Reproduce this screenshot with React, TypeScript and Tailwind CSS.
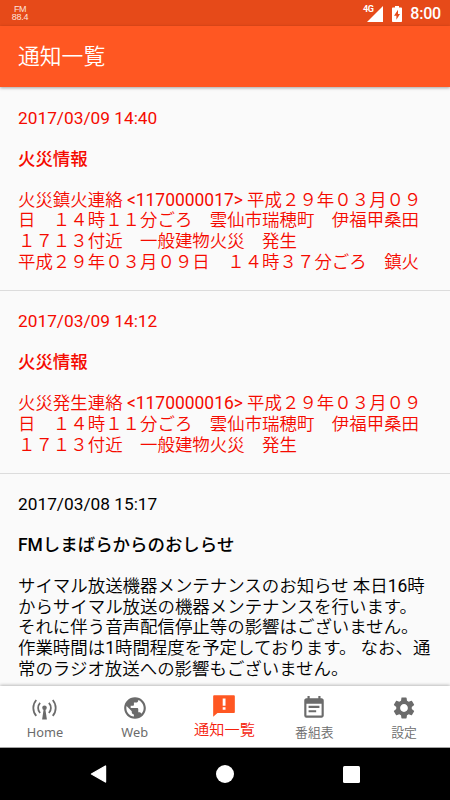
import { MdPublic, MdEventNote, MdSettings } from 'react-icons/md'
import type { ReactNode } from 'react'

// ── Data ──────────────────────────────────────────────────────

interface Notice {
  date:    string
  title:   string
  lines:   string[]
  urgent?: boolean
}

const NOTICES: Notice[] = [
  {
    date: '2017/03/09 14:40',
    title: '火災情報',
    urgent: true,
    lines: [
      '火災鎮火連絡 <1170000017> 平成２９年０３月０９',
      '日　１４時１１分ごろ　雲仙市瑞穂町　伊福甲桑田',
      '１７１３付近　一般建物火災　発生',
      '平成２９年０３月０９日　１４時３７分ごろ　鎮火',
    ],
  },
  {
    date: '2017/03/09 14:12',
    title: '火災情報',
    urgent: true,
    lines: [
      '火災発生連絡 <1170000016> 平成２９年０３月０９',
      '日　１４時１１分ごろ　雲仙市瑞穂町　伊福甲桑田',
      '１７１３付近　一般建物火災　発生',
    ],
  },
  {
    date: '2017/03/08 15:17',
    title: 'FMしまばらからのおしらせ',
    lines: [
      'サイマル放送機器メンテナンスのお知らせ 本日16時',
      'からサイマル放送の機器メンテナンスを行います。',
      'それに伴う音声配信停止等の影響はございません。',
      '作業時間は1時間程度を予定しております。 なお、通',
      '常のラジオ放送への影響もございません。',
    ],
  },
]

// ── Icons ─────────────────────────────────────────────────────

function AntennaIcon() {
  return (
    <svg viewBox="0 0 24 24" className="h-[26px] w-[25px]" fill="none" stroke="currentColor" strokeWidth="1.7">
      <path d="M4.1 4.3a11.6 11.6 0 0 0 0 15.2M19.9 4.3a11.6 11.6 0 0 1 0 15.2" />
      <path d="M7.8 7a7.2 7.2 0 0 0 0 9.8M16.2 7a7.2 7.2 0 0 1 0 9.8" />
      <circle cx="12" cy="11.7" r="2.2" fill="currentColor" stroke="none" />
      <path d="M11.2 12.9h1.6L14.3 23H9.7z" fill="currentColor" stroke="none" />
    </svg>
  )
}

function FeedbackIcon() {
  return (
    <svg viewBox="0 0 24 24" className="h-[26px] w-[26px]" fill="currentColor">
      <path d="M21 2H3c-.6 0-1 .4-1 1v19l4-3.5h15c.6 0 1-.4 1-1V3c0-.6-.4-1-1-1zm-7.6 13.5h-2.6v-2.3h2.6zm0-3.7h-2.6V5h2.6z" />
    </svg>
  )
}

function SignalIcon() {
  return (
    <svg viewBox="0 0 16 16" className="h-4 w-4" fill="#fff">
      <path d="M0 16 16 0v16z" />
    </svg>
  )
}

function BatteryIcon() {
  return (
    <svg viewBox="0 0 10 16" className="h-4 w-2.5">
      <path d="M3 0h4v1.6h2.2a.8.8 0 0 1 .8.8v12.8a.8.8 0 0 1-.8.8H.8a.8.8 0 0 1-.8-.8V2.4a.8.8 0 0 1 .8-.8H3z" fill="#fff" />
      <path d="M6 3.8 2 9.7h2.4v4L8 8H6z" fill="#e64a19" />
    </svg>
  )
}

// ── Parts ─────────────────────────────────────────────────────

function StatusBar() {
  return (
    <div className="flex h-[26px] shrink-0 items-center justify-between bg-[#e64a19] pl-[11px] pr-[9px] text-white">
      <div className="flex w-[18px] flex-col items-center font-['Liberation_Sans',sans-serif] text-[9px] leading-[8.5px] text-[#fde3db]">
        <span className="tracking-[-0.5px]">FM</span>
        <span className="tracking-[-0.3px]">88.4</span>
      </div>
      <div className="flex items-center pt-px">
        <span className="-mr-1.5 -mt-2 text-[9px] font-bold leading-none tracking-[-0.5px]">4G</span>
        <SignalIcon />
        <span className="ml-[9px] mr-2"><BatteryIcon /></span>
        <span className="text-base font-medium leading-none tracking-[-0.2px]">8:00</span>
      </div>
    </div>
  )
}

// Half-width runs take the regular weight, the Japanese text a lighter one
function MixedText({ text }: { text: string }) {
  return (
    <p>
      {text.split(/([!-~]+)/).map((part, i) => (
        i % 2 ? <span key={i} className="font-normal">{part}</span> : part
      ))}
    </p>
  )
}

function NoticeItem({ notice }: { notice: Notice }) {
  return (
    <article
      className={`flex flex-col gap-[20.6px] border-b border-[#dcdcdc] px-[18px] pb-[18.2px] pt-[19.5px] text-[17.45px] font-[350] leading-[20.6px]
        ${notice.urgent ? 'text-[#f50a00]' : 'text-black'}`}>
      <p className="text-[17.3px] font-normal">{notice.date}</p>
      <h2 className="font-medium">{notice.title}</h2>
      <div className="whitespace-nowrap">
        {notice.lines.map(line => <MixedText key={line} text={line} />)}
      </div>
    </article>
  )
}

function Tab({ label, icon, active }: { label: string; icon: ReactNode; active?: boolean }) {
  return (
    <button className={`flex flex-col items-center ${active ? 'pt-[7px] text-[#ff5722]' : 'pt-[9px] text-[#6b6b6b]'}`}>
      {icon}
      <span
        className={active
          ? 'mt-px text-[15.2px] font-[350] leading-5 text-[#f5200a]'
          : "mt-px font-['Noto_Sans','Noto_Sans_CJK_JP',sans-serif] text-[12.8px] leading-5"}>
        <span className={/^[A-Z]/.test(label) ? 'font-normal' : 'font-[350]'}>{label}</span>
      </span>
    </button>
  )
}

// ── Page ──────────────────────────────────────────────────────

export default function App() {
  return (
    <div className="flex h-[800px] w-[450px] flex-col overflow-hidden bg-[#fafafa] font-['Roboto','Noto_Sans_CJK_JP',sans-serif]">
      <StatusBar />
      <header className="z-10 flex h-[61px] shrink-0 items-center bg-[#ff5722] pl-[18px] pt-0.5 text-[21.8px] font-[350] text-white shadow-[0_1px_3px_rgba(0,0,0,0.35)]">
        <h1>通知一覧</h1>
      </header>

      <main className="min-h-0 flex-1 overflow-hidden pt-px">
        {NOTICES.map(n => <NoticeItem key={n.date} notice={n} />)}
      </main>

      {/* Tabs */}
      <nav className="z-10 h-[61px] shrink-0 bg-white shadow-[0_-1px_3px_rgba(0,0,0,0.25)]">
        <div className="grid w-[449px] grid-cols-5">
          <Tab label="Home" icon={<AntennaIcon />} />
          <Tab label="Web" icon={<MdPublic className="h-[26px] w-[26px]" />} />
          <Tab label="通知一覧" icon={<FeedbackIcon />} active />
          <Tab label="番組表" icon={<MdEventNote className="h-[26px] w-[26px]" />} />
          <Tab label="設定" icon={<MdSettings className="h-[26px] w-[26px]" />} />
        </div>
      </nav>

      {/* System buttons */}
      <div className="flex h-[53px] shrink-0 items-center justify-between border-t border-[#aaa] bg-black pl-[90px] pr-[90px]">
        <svg viewBox="0 0 18 18" className="h-[18px] w-[18px]">
          <path d="M1.5 9 15.5 1v16z" fill="#fff" stroke="#fff" strokeWidth="1.4" strokeLinejoin="round" />
        </svg>
        <span className="-ml-0.5 h-[18px] w-[18px] rounded-full bg-white" />
        <span className="h-[17px] w-[17px] rounded-[1.5px] bg-white" />
      </div>
    </div>
  )
}
